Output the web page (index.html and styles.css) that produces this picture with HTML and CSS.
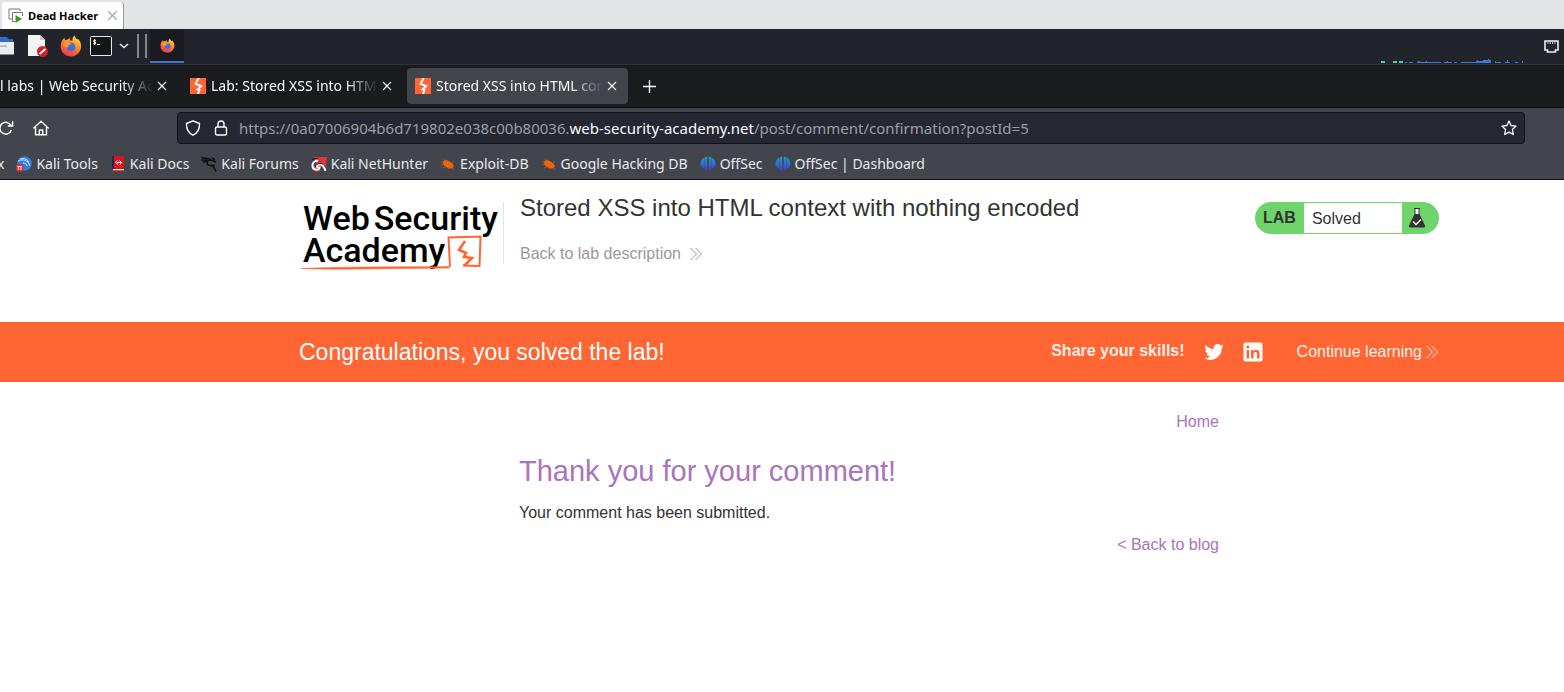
FILE: index.html
```html
<!DOCTYPE html>
<html lang="en">
<head>
<meta charset="utf-8">
<title>Stored XSS into HTML context with nothing encoded</title>
<link rel="stylesheet" href="styles.css">
</head>
<body>
<svg class="defs" width="0" height="0" aria-hidden="true">
  <defs>
    <linearGradient id="fire" x1="0.8" y1="0" x2="0.3" y2="1"><stop offset="0" stop-color="#ffe14a"/><stop offset="0.45" stop-color="#ff8a28"/><stop offset="1" stop-color="#f0304f"/></linearGradient>
    <linearGradient id="sec" x1="0" y1="0" x2="0" y2="1"><stop offset="0" stop-color="#1fa0b4"/><stop offset="0.5" stop-color="#2b6fd8"/><stop offset="1" stop-color="#5a2ca8"/></linearGradient>
    <symbol id="firefox" viewBox="0 0 24 24">
      <path fill="url(#fire)" d="M2.6 5.4 4.8 3l.6 2.4L8 5.2l3-2.2-.2 2.8 2.7.6C13.4 4 14 2 16 .6c.3 2.2 1.600 3.200 2.800 4.400l.7-1C22 6.500 23.500 9.500 23 13.200 22.400 19 18 23.400 12 23.400S1 19 .8 13C.7 10 1.200 7.500 2.600 5.400Z"/>
      <circle cx="12" cy="13" r="4.800" fill="#3c6fe0"/>
      <path fill="#ff9a2c" d="M3 10c2-2 4-2.500 6-1.500l3.500.3c-.4 1.400-1.800 1.800-3 2.100-.5 1-.2 2-1.200 2.600C6.500 13.500 4 12 3 10Z"/>
    </symbol>
    <symbol id="burp" viewBox="0 0 16 16">
      <path fill="#ff6633" d="M0 0h16v16H0z"/>
      <path d="M8.800 0 5.500 5.800 11.200 8 7.500 11.500 9.500 12 8 16" fill="none" stroke="#fff" stroke-width="1.900"/>
    </symbol>
    <symbol id="cross" viewBox="0 0 10 10"><path d="M1 1l8 8M9 1 1 9" fill="none" stroke="currentColor" stroke-width="1.100"/></symbol>
    <symbol id="cross-bold" viewBox="0 0 10 10"><path d="M1 1l8 8M9 1 1 9" fill="none" stroke="currentColor" stroke-width="1.600"/></symbol>
    <symbol id="spider" viewBox="0 0 16 12">
      <path fill="#ee6510" d="M3 3.500 5 2l2 .2 3 1.500L13 6l.8 3-2.300 1.500L8 10.200 4.500 8 3 6Z"/>
      <path d="M1 4h4M1 7l4-1M3 10l4-2M4 .8 7 4M8 11l1-3M12 11h3M12 5l1.500-2" stroke="#c85a1c" stroke-width=".7" fill="none"/>
    </symbol>
    <symbol id="offsec" viewBox="0 0 16 16">
      <path fill="url(#sec)" d="M4.500 1.500v12C1.800 12.300.5 10 .5 7.600S2 2.700 4.500 1.500ZM4.900 1.200l2.300-.7v15L4.900 14ZM8.800.5l2.300.7v12.800l-2.300 1.500ZM11.500 1.500c2.500 1.200 4 3.700 4 6.100s-1.300 4.700-4 5.900Z"/>
    </symbol>
    <symbol id="chevrons" viewBox="0 0 14 14"><path d="M1.500 1l6 6-6 6M6.500 1l6 6-6 6" fill="none" stroke="currentColor" stroke-width="1"/></symbol>
  </defs>
</svg>

<div class="host-bar">
  <div class="host-tab">
    <svg width="16" height="16" viewBox="0 0 16 16" aria-hidden="true"><path d="M5 11H1V1h11v2" fill="none" stroke="#777"/><path d="M7 13.500H4.500v-9h10V8" fill="none" stroke="#777"/><path d="M7.500 7v8l6.500-4Z" fill="#3f9a1c"/></svg>
    <span>Dead Hacker</span>
    <button class="icon-btn host-close" aria-label="Close machine tab"><svg width="11" height="11"><use href="#cross-bold"/></svg></button>
  </div>
</div>

<div class="panel">
  <button class="icon-btn files" aria-label="Files"><svg width="14" height="20" viewBox="0 0 14 20"><path fill="#2e6cc8" d="M0 1h7l1.500 2H13v5H0Z"/><path fill="#e9edf2" d="M0 6h14v12.500H0Z"/><path fill="#aeb8c4" d="M0 9.500h7v1.500H0Z"/></svg></button>
  <button class="icon-btn editor" aria-label="Text editor"><svg width="22" height="24" viewBox="0 0 22 24"><path fill="#f3f3f4" d="M1 1h12l5 5v16H1Z"/><path fill="#c7c9cc" d="M13 1v5h5Z"/><circle cx="15.500" cy="17.500" r="5.500" fill="#d1202a"/><path d="m12.500 20 6-5" stroke="#fff" stroke-width="1.800"/></svg></button>
  <button class="icon-btn browser" aria-label="Firefox"><svg width="22" height="22"><use href="#firefox"/></svg></button>
  <button class="icon-btn" aria-label="Terminal"><svg width="22" height="20" viewBox="0 0 22 20"><rect x=".5" y=".5" width="21" height="19" rx="1" fill="#15161a" stroke="#e8e8e8"/><path d="M5.800 4.500c-2-.8-2.600 1-1.200 1.500s1.200 2.200-1.200 1.500M4.600 3v6M7 8.500h3" fill="none" stroke="#fff" stroke-width="1.200"/></svg></button>
  <button class="icon-btn more" aria-label="More terminals"><svg width="10" height="6" viewBox="0 0 10 6"><path d="m1 1 4 3.500L9 1" fill="none" stroke="#eee" stroke-width="1.600"/></svg></button>
  <span class="bars"></span>
  <button class="icon-btn task" aria-label="Firefox window"><svg width="15" height="15"><use href="#firefox"/></svg></button>
  <svg class="graph" width="144" height="5" viewBox="0 0 144 5" aria-hidden="true"><path fill="#43d3ac" d="M0 3h4v2H0zM12 3h4v2h-4zM18 3h4v2h-4z"/><path fill="#3b78dc" d="M24 4h2v1h-2zM28 4h4v1h-4zM36 4h24v1H36zM37 3h2v1h-2zM45 3h1v1h-1zM63 4h8v1h-8zM66 3h1v1h-1zM73 4h3v1h-3zM80 4h30v1H80zM95 3h15v1H95zM96 2h1v1h-1zM102 2h8v2h-8zM107 1h1v1h-1zM114 4h6v1h-6zM114 3h1v1h-1zM124 4h5v1h-5zM126 2h1v2h-1zM134 4h3v1h-3zM141 3h1v2h-1z"/></svg>
  <button class="icon-btn" aria-label="Network"><svg width="15" height="13" viewBox="0 0 15 13"><path d="M1 1h13v9h-2.500v2h-8v-2H1Z" fill="none" stroke="#eee" stroke-width="1.600"/><path d="M4 1v3M6.300 1v3M8.600 1v3M11 1v3" stroke="#ccc"/></svg></button>
</div>

<div class="tabs">
  <div class="tab cut"><span class="tab-name">l labs | Web Security Academy</span><button class="icon-btn" aria-label="Close tab"><svg width="10" height="10"><use href="#cross"/></svg></button></div>
  <div class="tab"><svg width="16" height="16"><use href="#burp"/></svg><span class="tab-name">Lab: Stored XSS into HTML context</span><button class="icon-btn" aria-label="Close tab"><svg width="10" height="10"><use href="#cross"/></svg></button></div>
  <div class="tab current"><svg width="16" height="16"><use href="#burp"/></svg><span class="tab-name">Stored XSS into HTML context</span><button class="icon-btn" aria-label="Close tab"><svg width="10" height="10"><use href="#cross"/></svg></button></div>
  <button class="icon-btn new-tab" aria-label="New tab"><svg width="13" height="13" viewBox="0 0 13 13"><path d="M6.500 0v13M0 6.500h13" stroke="currentColor" stroke-width="1.400"/></svg></button>
</div>

<div class="nav">
  <button class="icon-btn reload" aria-label="Reload"><svg width="14" height="16" viewBox="0 0 14 16"><path d="M11 5.500A5.900 5.900 0 1 0 11.400 10M12.600 1.200v4.800H7.800" fill="none" stroke="currentColor" stroke-width="1.500"/></svg></button>
  <button class="icon-btn home" aria-label="Home"><svg width="16" height="16" viewBox="0 0 16 16"><path d="M.8 8 8 1.200 15.200 8M2.500 7v7.800h11V7M6.300 14.500V10h3.400v4.500" fill="none" stroke="currentColor" stroke-width="1.400" stroke-linejoin="round" stroke-linecap="round"/></svg></button>
  <div class="address">
    <svg width="16" height="16" viewBox="0 0 16 16" aria-hidden="true"><path d="M8 .8 14.500 3.500C14.800 9 12.500 13 8 15.200 3.500 13 1.200 9 1.500 3.500Z" fill="none" stroke="currentColor" stroke-width="1.400" stroke-linejoin="round"/></svg>
    <svg width="14" height="16" viewBox="0 0 14 16" aria-hidden="true"><rect x="1.500" y="7" width="11" height="8" rx="1.500" fill="none" stroke="currentColor" stroke-width="1.400"/><path d="M4 7V4a3 3 0 0 1 6 0v3" fill="none" stroke="currentColor" stroke-width="1.400"/></svg>
    <span class="url">https://0a07006904b6d719802e038c00b80036.<b>web-security-academy.net</b>/post/comment/confirmation?postId=5</span>
    <button class="icon-btn" aria-label="Bookmark this page"><svg width="16" height="16" viewBox="0 0 16 16"><path d="m8 1 2.100 4.500 4.900.6-3.600 3.400.9 5L8 12.100l-4.300 2.400.9-5L1 6.100l4.900-.6Z" fill="none" stroke="currentColor" stroke-width="1.300" stroke-linejoin="round"/></svg></button>
  </div>
</div>

<nav class="bookmarks" aria-label="Bookmarks">
  <a href="#">x</a>
  <a href="#"><svg width="16" height="16" viewBox="0 0 16 16"><circle cx="8.500" cy="7.500" r="7.300" fill="#2f7fe6"/><path d="M2 5c4-2 7-1 10 1l2 4M4 3c4-1 7 0 9 3M7 7c2 0 4 1 4 3" fill="none" stroke="#d9ecff" stroke-width="1"/><rect y="8" width="7.500" height="7.500" rx="2" fill="#dc2f36"/><path d="M1.500 10.500h4.500M2.700 10.500V14M5 10.500V14" fill="none" stroke="#fff" stroke-width=".9"/></svg>Kali Tools</a>
  <a href="#"><svg width="16" height="16" viewBox="0 0 16 16"><path fill="#d9131a" d="M3 0h11v13H3z"/><path fill="#27265c" d="M2 0h2v13H2z"/><path fill="#e8e8e8" d="M3 13h11v1.500H3z"/><path fill="#d9131a" d="M2 14.500h12v1H2z"/><path d="M7.500 4.500 5.500 6.500 8 8.500M9.500 4.500 11.500 6.500 10 8.500M7 6.500h4" fill="none" stroke="#fff" stroke-width="1"/></svg>Kali Docs</a>
  <a href="#"><svg width="16" height="16" viewBox="0 0 16 16"><path d="M.5 1.500 6 2.500 9 3M.5 4 6 4M2 6.500 6 4.500 10 4 15 6M11 2l3 2M7 4.500C5 7 6 9 9 9.500S13.500 11 15 15.500M10 9.500h4" fill="none" stroke="#101114" stroke-width="1.700"/></svg>Kali Forums</a>
  <a href="#"><svg width="16" height="16" viewBox="0 0 16 16"><path fill="#e23439" d="M3 1h13l-1 10-4-4-5 2Z"/><path fill="#e23439" d="m2 9 8 5-2 1.500H4Z"/><path d="M7 4.500C3 5 1 7 1.500 10.500S8 15 8.500 11.500C5 12 5 8.500 8.500 8.500s5 3 6 6.500" fill="none" stroke="#fff" stroke-width="2"/><path d="M1 4c2-2 5-2 6-1M4.500 11c0-2 2-4 6-3.500" fill="none" stroke="#111" stroke-width=".9"/></svg>Kali NetHunter</a>
  <a href="#"><svg width="16" height="12"><use href="#spider"/></svg>Exploit-DB</a>
  <a href="#"><svg width="16" height="12"><use href="#spider"/></svg>Google Hacking DB</a>
  <a href="#"><svg width="16" height="16"><use href="#offsec"/></svg>OffSec</a>
  <a href="#"><svg width="16" height="16"><use href="#offsec"/></svg>OffSec | Dashboard</a>
</nav>

<div class="page">
  <header class="band">
    <div class="wrap lab-head">
      <a class="logo" href="#" aria-label="Web Security Academy">
        <span class="logo-line"><span>Web</span><span>Security</span></span>
        <span class="logo-line">Academy</span>
        <svg class="logo-mark" width="184" height="36" viewBox="0 0 184 36" aria-hidden="true"><path d="M149 31.800 147.500 2.500 179.500 1.500 178.500 31 162 30.500" fill="none" stroke="#ff6633" stroke-width="2"/><path d="M0 33.500Q50 31.500 136 31.800l12-.4V33L60 34Q20 34.500 0 33.500Z" fill="#ff6633" stroke="#ff6633" stroke-width=".6"/><path d="m164 6-6 9 7 3-2 4 8 1-8 8" fill="none" stroke="#ff6633" stroke-width="2.600"/></svg>
      </a>
      <div class="lab-title">
        <h2>Stored XSS into HTML context with nothing encoded</h2>
        <a class="back-lab" href="#">Back to lab description <svg width="14" height="14"><use href="#chevrons"/></svg></a>
      </div>
      <div class="status">
        <b>LAB</b><span class="state">Solved</span>
        <svg width="18" height="22" viewBox="0 0 18 22" aria-hidden="true"><path fill="#fff" d="M7 2h4v5H7z"/><path d="M6 1.500h6M7 2v5M11 2v5" stroke="#333332"/><path fill="#333332" d="M6.500 7h5L17 18.500c.5 1.200-.2 2-1.300 2H2.300c-1.100 0-1.800-.8-1.300-2Z"/><path d="m5 14.500 3 3 5-5" fill="none" stroke="#fff" stroke-width="1.300"/></svg>
      </div>
    </div>
  </header>

  <section class="band solved">
    <div class="wrap solved-row">
      <h4>Congratulations, you solved the lab!</h4>
      <b class="share">Share your skills!</b>
      <a class="social" href="#" aria-label="Twitter"><svg width="20" height="20" viewBox="0 0 24 24"><path fill="#fff" d="M23.600 4.900c-.8.400-1.700.6-2.700.8 1-.6 1.700-1.500 2-2.600-.9.500-1.900.9-3 1.100a4.700 4.700 0 0 0-8.100 4.300C7.900 8.300 4.400 6.400 2 3.500a4.700 4.700 0 0 0 1.500 6.300c-.8 0-1.500-.2-2.100-.6 0 2.300 1.600 4.200 3.800 4.700-.7.200-1.400.2-2.100.1.600 1.900 2.300 3.200 4.400 3.300A9.500 9.500 0 0 1 .5 19.200a13.400 13.400 0 0 0 20.700-11.900c.9-.6 1.700-1.500 2.400-2.400Z"/></svg></a>
      <a class="social" href="#" aria-label="LinkedIn"><svg width="20" height="20" viewBox="0 0 20 20"><rect x=".5" y=".5" width="19" height="19" rx="2" fill="#fff"/><path fill="#ff6633" d="M3.600 8h2.500v8.500H3.600zM8 8h2.400v1.300c1.300-2.200 6.200-2.200 6.200 2v5.200H14V12c0-2.800-3.500-2.600-3.500 0v4.500H8z"/><circle cx="4.800" cy="5" r="1.600" fill="#ff6633"/></svg></a>
      <a class="continue" href="#">Continue learning <svg width="14" height="14"><use href="#chevrons"/></svg></a>
    </div>
  </section>

  <main class="band">
    <div class="content">
      <nav class="right"><a href="#">Home</a></nav>
      <h1>Thank you for your comment!</h1>
      <p>Your comment has been submitted.</p>
      <div class="right"><a href="#">&lt; Back to blog</a></div>
    </div>
  </main>
</div>
</body>
</html>
```
FILE: styles.css
```css
* { box-sizing: border-box; }
body { margin: 0; background: #fff; color: #333332; font-family: "Liberation Sans", Arial, sans-serif; font-size: 16px; line-height: 20px; }
a { color: inherit; text-decoration: none; }
h1, h2, h4, p { margin: 0; font-weight: 400; }
svg { flex: none; }
.defs { position: absolute; }
.icon-btn { display: flex; align-items: center; justify-content: center; flex: none; padding: 0; border: 0; background: none; color: inherit; }

.host-bar { display: flex; align-items: flex-end; height: 29px; background: #e3e4e6; }
.host-tab { display: flex; align-items: center; gap: 4px; height: 27px; margin-left: 2px; padding: 0 5px 0 6px; border-right: 1px solid #999; border-radius: 3px 4px 0 0; background: #fff; color: #000; font: 700 11px "Open Sans", sans-serif; }
.host-close { margin-left: 5px; color: #bbb; }

.panel { display: flex; align-items: center; height: 36px; padding: 0 5px 1px 0; border-bottom: 1px solid #303238; background: #22242b; }
.editor { margin-left: 13px; }
.browser { margin: 0 8px 0 11px; }
.more { width: 24px; }
.bars { width: 10px; height: 24px; margin: 0 3px 0 1px; border: solid #85878c; border-width: 0 2px; }
.task { width: 34px; height: 34px; border-bottom: 2px solid #3f72cc; background: #1a1b20; }
.graph { align-self: flex-end; margin: 0 19px 0 auto; }

.tabs, .nav, .bookmarks { font-family: "Noto Sans", sans-serif; font-size: 14px; }
.tabs { display: flex; align-items: center; gap: 4px; height: 43px; border-bottom: 1px solid #0c0c0f; background: #1a1b1f; color: #fbfbfe; }
.tab { display: flex; align-items: center; width: 221px; height: 36px; padding: 0 11px 0 8px; border-radius: 4px; }
.tab.cut { width: 178px; padding-left: 0; }
.tab.current { background: #42454c; }
.tab-name { flex: 1; overflow: hidden; margin: 0 4px 0 5px; white-space: nowrap; -webkit-mask-image: linear-gradient(to left, transparent, #000 32px); mask-image: linear-gradient(to left, transparent, #000 32px); }
.cut .tab-name { margin-left: 0; }
.new-tab { width: 34px; height: 36px; }

.nav { display: flex; align-items: center; height: 40px; background: #42454c; color: #fbfbfe; }
.reload { margin-right: 19px; }
.address { display: flex; flex: 1; align-items: center; height: 32px; margin: 0 39px 0 128px; padding: 0 7px; border: 1px solid #111217; border-radius: 4px; background: #252832; }
.address > svg + svg { margin: 0 11px 0 13px; }
.url { flex: 1; color: #9d9ea5; font-size: 15px; white-space: nowrap; }
.url b { color: #fbfbfe; font-weight: 400; }

.bookmarks { display: flex; align-items: center; gap: 12px; height: 32px; border-bottom: 1px solid #111; background: #42454c; color: #e9e9ec; overflow: hidden; white-space: nowrap; }
.bookmarks a { display: flex; align-items: center; gap: 4px; }
.bookmarks a:first-child { margin-left: -3px; }

.band { padding-left: 174px; }
.wrap { display: flex; width: 100%; max-width: 1140px; margin: 0 auto; }
.lab-head { min-height: 142px; padding-top: 17px; align-items: flex-start; }
.logo { position: relative; flex: none; width: 205px; height: 62px; margin-top: 5px; padding-left: 4px; border-right: 1px solid #e3e3e3; color: #000; font: 500 34px/32px Roboto, sans-serif; white-space: nowrap; }
.logo-line { display: flex; gap: 4px; }
.logo-mark { position: absolute; left: 2px; top: 33px; }
.lab-title { flex: 1; padding-left: 16px; }
.lab-title h2 { font-size: 24px; line-height: 22px; }
.back-lab { display: flex; align-items: center; gap: 8px; margin-top: 25px; color: #999; }
.status { display: flex; align-items: center; width: 184px; height: 32px; margin-top: 5px; padding: 0 13px 0 8px; border-radius: 16px; background: #70d46d; }
.state { flex: 1; height: 30px; margin: 0 6px 0 8px; padding-left: 8px; background: #fff; line-height: 31px; }

.solved { background: #ff6633; color: #fff; }
.solved-row { align-items: center; min-height: 60px; }
.solved h4 { flex: 1; font-size: 23px; line-height: 28px; }
.share { padding-bottom: 2px; color: #ffefe8; }
.social { display: flex; margin-left: 19px; }
.continue { display: flex; align-items: center; gap: 3px; margin-left: 34px; color: #fff0ea; }

.content { width: 100%; max-width: 700px; margin: 0 auto; padding-top: 30px; }
.right { display: flex; justify-content: flex-end; color: #a974bd; }
.content h1 { margin-top: 21px; color: #a974bd; font-size: 29px; line-height: 36px; }
.content p { margin: 14px 0 12px; }
```
